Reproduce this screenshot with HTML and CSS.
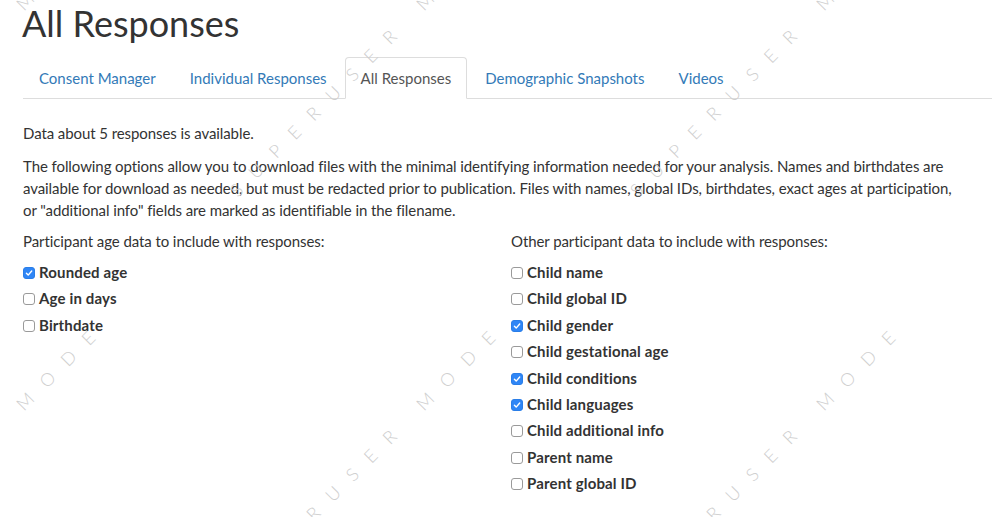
FILE: index.html
```html
<!DOCTYPE html>
<html lang="en">
<head>
<meta charset="utf-8">
<title>All Responses</title>
<link rel="stylesheet" href="styles.css">
</head>
<body>
<div class="page">
  <h1 class="title">All Responses</h1>
  <ul class="tabs">
    <li class="tab"><a class="tab-link">Consent Manager</a></li>
    <li class="tab"><a class="tab-link">Individual Responses</a></li>
    <li class="tab active"><a class="tab-link">All Responses</a></li>
    <li class="tab"><a class="tab-link">Demographic Snapshots</a></li>
    <li class="tab"><a class="tab-link">Videos</a></li>
  </ul>
  <div class="tab-content">
    <p class="para">Data about 5 responses is available.</p>
    <p class="para intro">The following options allow you to download files with the minimal identifying information needed for your analysis. Names and birthdates are available for download as needed, but must be redacted prior to publication. Files with names, global IDs, birthdates, exact ages at participation, or "additional info" fields are marked as identifiable in the filename.</p>
    <div class="cols">
      <div class="col">
        <p class="col-title">Participant age data to include with responses:</p>
        <label class="cb"><span class="box on"><svg viewBox="0 0 12 12" width="12" height="12"><path d="M3.4 6.3 L5.2 8.1 L8.7 4" fill="none" stroke="#fff" stroke-width="1.4" stroke-linecap="round" stroke-linejoin="round"/></svg></span>Rounded age</label>
        <label class="cb"><span class="box"></span>Age in days</label>
        <label class="cb"><span class="box"></span>Birthdate</label>
      </div>
      <div class="col">
        <p class="col-title">Other participant data to include with responses:</p>
        <label class="cb"><span class="box"></span>Child name</label>
        <label class="cb"><span class="box"></span>Child global ID</label>
        <label class="cb"><span class="box on"><svg viewBox="0 0 12 12" width="12" height="12"><path d="M3.4 6.3 L5.2 8.1 L8.7 4" fill="none" stroke="#fff" stroke-width="1.4" stroke-linecap="round" stroke-linejoin="round"/></svg></span>Child gender</label>
        <label class="cb"><span class="box"></span>Child gestational age</label>
        <label class="cb"><span class="box on"><svg viewBox="0 0 12 12" width="12" height="12"><path d="M3.4 6.3 L5.2 8.1 L8.7 4" fill="none" stroke="#fff" stroke-width="1.4" stroke-linecap="round" stroke-linejoin="round"/></svg></span>Child conditions</label>
        <label class="cb"><span class="box on"><svg viewBox="0 0 12 12" width="12" height="12"><path d="M3.4 6.3 L5.2 8.1 L8.7 4" fill="none" stroke="#fff" stroke-width="1.4" stroke-linecap="round" stroke-linejoin="round"/></svg></span>Child languages</label>
        <label class="cb"><span class="box"></span>Child additional info</label>
        <label class="cb"><span class="box"></span>Parent name</label>
        <label class="cb"><span class="box"></span>Parent global ID</label>
      </div>
    </div>
  </div>
</div>
<svg class="watermark" width="992" height="517" aria-hidden="true">
  <g class="wm-text">
    <text transform="translate(-32 58) rotate(-45)" text-anchor="middle" dominant-baseline="central">SUPERUSER MODE</text>
    <text transform="translate(368 58) rotate(-45)" text-anchor="middle" dominant-baseline="central">SUPERUSER MODE</text>
    <text transform="translate(768 58) rotate(-45)" text-anchor="middle" dominant-baseline="central">SUPERUSER MODE</text>
    <text transform="translate(-32 458) rotate(-45)" text-anchor="middle" dominant-baseline="central">SUPERUSER MODE</text>
    <text transform="translate(368 458) rotate(-45)" text-anchor="middle" dominant-baseline="central">SUPERUSER MODE</text>
    <text transform="translate(768 458) rotate(-45)" text-anchor="middle" dominant-baseline="central">SUPERUSER MODE</text>
  </g>
</svg>
</body>
</html>
```
FILE: styles.css
```css
html, body {
  margin: 0;
  padding: 0;
  background: #fff;
}
body {
  font-family: Lato, "Open Sans", "Liberation Sans", sans-serif;
  font-size: 15px;
  color: #333;
  overflow: hidden;
  width: 992px;
  height: 517px;
  position: relative;
}
.page {
  padding: 0 23px;
}
.title {
  font-size: 36px;
  font-weight: 400;
  line-height: 40px;
  margin: 3px 0 0 -1px;
  color: #333;
}
.tabs {
  list-style: none;
  margin: 14px -23px 0 0;
  padding: 0;
  display: flex;
  border-bottom: 1px solid #ddd;
}
.tab {
  margin-bottom: -1px;
}
.tab-link {
  display: block;
  padding: 10px 15px;
  line-height: 20px;
  margin-right: 2px;
  border: 1px solid transparent;
  border-radius: 4px 4px 0 0;
  color: #337ab7;
}
.tab.active .tab-link {
  color: #555;
  background: #fff;
  border-color: #ddd #ddd transparent;
}
.tab-content {
  padding-top: 23px;
}
.para {
  margin: 0 0 11px;
  line-height: 22px;
  letter-spacing: -0.08px;
}
.intro {
  margin-bottom: 9px;
  max-width: 935px;
}
.cols {
  display: grid;
  grid-template-columns: 1fr 1fr;
  column-gap: 30px;
}
.col-title {
  margin: 0 0 10px;
  line-height: 22px;
  letter-spacing: -0.08px;
}
.cb {
  display: block;
  font-weight: 700;
  line-height: 21.4px;
  margin-bottom: 5px;
  letter-spacing: 0.15px;
}
.box {
  display: inline-block;
  box-sizing: border-box;
  width: 12px;
  height: 12px;
  margin: 0 4px 0 0;
  border: 1px solid #9a9a9a;
  border-radius: 3px;
  background: #fff;
  vertical-align: -1px;
  position: relative;
}
.box.on {
  background: #2f86f6;
  border-color: #2a7ee8;
}
.box svg {
  position: absolute;
  left: -1px;
  top: -1px;
}
.watermark {
  position: absolute;
  left: 0;
  top: 0;
  pointer-events: none;
}
.wm-text {
  font-family: Lato, "Open Sans", sans-serif;
  font-weight: 300;
  font-size: 18px;
  letter-spacing: 16px;
  fill: #cfcfcf;
}
```
